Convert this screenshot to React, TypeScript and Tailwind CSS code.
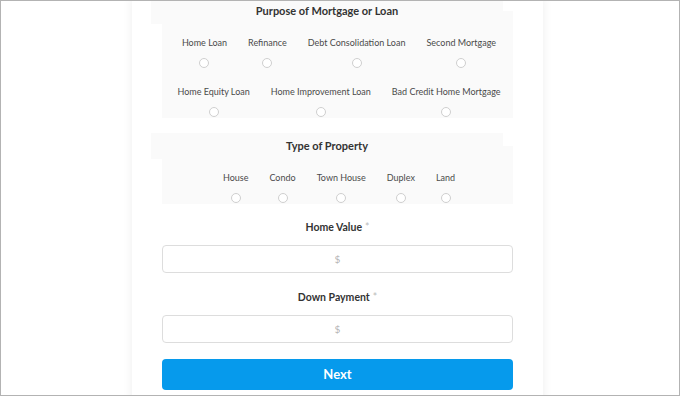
import React from "react";

const Radio = () => (
  <span className="block h-[10px] w-[10px] rounded-full border border-[#cfcfcf] bg-white" />
);

const Option = ({ label }: { label: string }) => (
  <div className="flex flex-col items-center gap-[8px]">
    <span className="text-[9px] leading-[14px] text-[#4a4a4a] whitespace-nowrap">{label}</span>
    <Radio />
  </div>
);

const Section = ({ title, rows, first }: { title: string; rows: string[][]; first?: boolean }) => (
  <div className={first ? "-mt-[3px]" : "mt-[15px]"}>
    <div className="ml-[19px] flex h-[26px] w-[352px] items-center justify-center bg-[#fafafa]">
      <span className="text-[11px] font-bold text-[#333]">{title}</span>
    </div>
    <div className="-mt-[13px] ml-[30px] flex w-[351px] flex-col items-center gap-[17px] bg-[#fafafa] pt-[25px] pb-[1px] pl-[3px]">
      {rows.map((row, i) => (
        <div key={i} className="flex justify-center gap-x-[21px]">
          {row.map((o) => (
            <Option key={o} label={o} />
          ))}
        </div>
      ))}
    </div>
  </div>
);

const Field = ({ label, top }: { label: string; top: string }) => (
  <div className={`${top} w-[351px]`}>
    <div className="flex justify-center text-[10.5px] font-bold text-[#333] leading-[16px]">
      {label}
      <span className="ml-[3px] font-normal text-[#bbb]">*</span>
    </div>
    <div className="mt-[10px] flex h-[28px] w-[351px] items-center justify-center rounded-[4px] border border-[#ddd] bg-white text-[10px] text-[#b5b5b5]">
      $
    </div>
  </div>
);

export default function App() {
  return (
    <div
      className="h-[396px] w-[680px] overflow-hidden border border-[#b3b3b3] bg-white"
      style={{ fontFamily: "Lato, 'Open Sans', sans-serif" }}
    >
      <div className="ml-[131px] h-[420px] w-[411px] bg-white shadow-[0_0_10px_rgba(0,0,0,0.07)]">
        <Section
          first
          title="Purpose of Mortgage or Loan"
          rows={[
            ["Home Loan", "Refinance", "Debt Consolidation Loan", "Second Mortgage"],
            ["Home Equity Loan", "Home Improvement Loan", "Bad Credit Home Mortgage"],
          ]}
        />
        <Section title="Type of Property" rows={[["House", "Condo", "Town House", "Duplex", "Land"]]} />
        <div className="pl-[30px]">
          <Field label="Home Value" top="mt-[15px]" />
          <Field label="Down Payment" top="mt-[16px]" />
          <button className="mt-[16px] flex h-[31px] w-[351px] items-center justify-center rounded-[4px] bg-[#069aec] text-[13px] font-bold text-white">
            Next
          </button>
        </div>
      </div>
    </div>
  );
}
